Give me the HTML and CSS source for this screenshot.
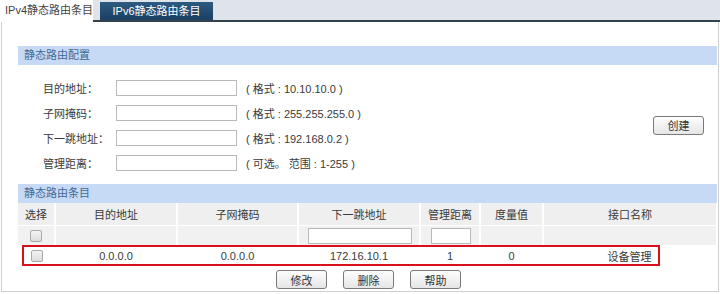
FILE: index.html
```html
<!DOCTYPE html>
<html lang="zh">
<head>
    <meta charset="UTF-8">
    <title>静态路由</title>
    <link rel="stylesheet" href="styles.css">
</head>
<body>
    <div class="tabs">
        <div class="tab active">IPv4静态路由条目</div>
        <div class="tab dark">IPv6静态路由条目</div>
    </div>
    <div class="panel">
        <div class="section-head">静态路由配置</div>
        <div class="config">
            <div class="form">
                <div class="row">
                    <span class="label">目的地址：</span>
                    <input type="text" class="field">
                    <span class="hint">( 格式 : 10.10.10.0 )</span>
                </div>
                <div class="row">
                    <span class="label">子网掩码：</span>
                    <input type="text" class="field">
                    <span class="hint">( 格式 : 255.255.255.0 )</span>
                </div>
                <div class="row">
                    <span class="label">下一跳地址：</span>
                    <input type="text" class="field">
                    <span class="hint">( 格式 : 192.168.0.2 )</span>
                </div>
                <div class="row">
                    <span class="label">管理距离：</span>
                    <input type="text" class="field">
                    <span class="hint">( 可选。 范围 : 1-255 )</span>
                </div>
            </div>
            <button class="btn">创建</button>
        </div>

        <div class="section-head">静态路由条目</div>
        <div class="table-wrap">
            <table class="routes">
                <colgroup>
                    <col class="c-sel"><col class="c-ip"><col class="c-mask"><col class="c-hop">
                    <col class="c-dist"><col class="c-metric"><col class="c-if">
                </colgroup>
                <tr class="head">
                    <th>选择</th><th>目的地址</th><th>子网掩码</th><th>下一跳地址</th>
                    <th>管理距离</th><th>度量值</th><th>接口名称</th>
                </tr>
                <tr class="filter">
                    <td><span class="check"></span></td>
                    <td></td>
                    <td></td>
                    <td><input type="text" class="filter-hop"></td>
                    <td><input type="text" class="filter-dist"></td>
                    <td></td>
                    <td></td>
                </tr>
                <tr class="data">
                    <td><span class="check"></span></td>
                    <td>0.0.0.0</td>
                    <td>0.0.0.0</td>
                    <td>172.16.10.1</td>
                    <td>1</td>
                    <td>0</td>
                    <td>设备管理</td>
                </tr>
            </table>
            <div class="highlight"></div>
        </div>
        <div class="actions">
            <button class="btn">修改</button>
            <button class="btn">删除</button>
            <button class="btn">帮助</button>
        </div>
    </div>
</body>
</html>
```

FILE: styles.css
```css
body {
    margin: 0;
    width: 720px;
    height: 294px;
    overflow: hidden;
    background: #fff;
    font-family: "Liberation Sans", "Noto Sans CJK SC", sans-serif;
    font-size: 11px;
    color: #3a3a3a;
}
.tabs {
    display: flex;
    align-items: flex-end;
    height: 20px;
    background-color: #dfe4ea;
    border-bottom: 2px solid #34414f;
}
.tab {
    height: 18px;
    line-height: 18px;
    white-space: nowrap;
}
.tab.active {
    width: 93px;
    height: 22px;
    line-height: 20px;
    margin-bottom: -2px;
    padding-left: 5px;
    box-sizing: border-box;
    background-color: #fff;
    color: #444;
}
.tab.dark {
    width: 113px;
    margin-left: 7px;
    text-align: center;
    background: linear-gradient(#2d5a80, #1b4063);
    color: #fff;
}
.panel {
    margin: 0 1px;
    height: 270px;
    border: 1px solid #cfcfcf;
    border-top: none;
    padding: 24px 1px 0 16px;
    box-sizing: border-box;
}
.section-head {
    height: 19px;
    line-height: 19px;
    padding-left: 6px;
    background-color: #c6daf6;
    color: #3f6a94;
}
.config {
    display: flex;
    align-items: center;
    justify-content: space-between;
    padding: 14px 13px 13px 25px;
}
.form {
    display: flex;
    flex-direction: column;
    gap: 8px;
}
.row {
    display: flex;
    align-items: center;
    height: 17px;
}
.label {
    width: 73px;
}
.field {
    width: 121px;
    height: 16px;
    margin: 0;
    padding: 0 2px;
    border: 1px solid #b9b9b9;
    box-sizing: border-box;
}
.hint {
    margin-left: 9px;
    white-space: pre;
}
.btn {
    width: 51px;
    height: 19px;
    padding: 0;
    border: 1px solid #7a7a7a;
    border-radius: 3px;
    background: linear-gradient(#fdfdfd, #e6e6e6);
    font-family: "Liberation Sans", "Noto Sans CJK SC", sans-serif;
    font-size: 11px;
    color: #333;
}
.table-wrap {
    position: relative;
}
.routes {
    width: 698px;
    border-collapse: collapse;
    table-layout: fixed;
}
.c-sel { width: 37px; }
.c-ip { width: 122px; }
.c-mask { width: 121px; }
.c-hop { width: 122px; }
.c-dist { width: 60px; }
.c-metric { width: 63px; }
.c-if { width: 173px; }
.routes th,
.routes td {
    padding: 0;
    text-align: center;
    font-weight: normal;
}
.routes .head th {
    height: 22px;
    background-color: #efefef;
    border-left: 2px solid #fff;
}
.routes .head th:first-child,
.routes .filter td:first-child {
    border-left: none;
}
.routes .filter td {
    height: 19px;
    background-color: #f1f1f1;
    border-left: 2px solid #fff;
    border-top: 1px solid #fff;
}
.routes .data td {
    height: 21px;
}
.check {
    display: inline-block;
    width: 10px;
    height: 10px;
    border: 1px solid #a9a9a9;
    border-radius: 2px;
    background: linear-gradient(#f4f4f4, #dcdcdc);
    vertical-align: middle;
}
.filter-hop {
    width: 104px;
    height: 16px;
    margin: 0 0 0 2px;
    border: 1px solid #b9b9b9;
    box-sizing: border-box;
    vertical-align: middle;
}
.filter-dist {
    width: 40px;
    height: 16px;
    margin: 0 0 0 2px;
    border: 1px solid #b9b9b9;
    box-sizing: border-box;
    vertical-align: middle;
}
.highlight {
    position: absolute;
    left: 4px;
    top: 42px;
    width: 638px;
    height: 21px;
    border: 2px solid #d9101c;
    box-sizing: border-box;
}
.actions {
    display: flex;
    justify-content: center;
    gap: 16px;
    padding: 4px 0 0 2px;
}
```
